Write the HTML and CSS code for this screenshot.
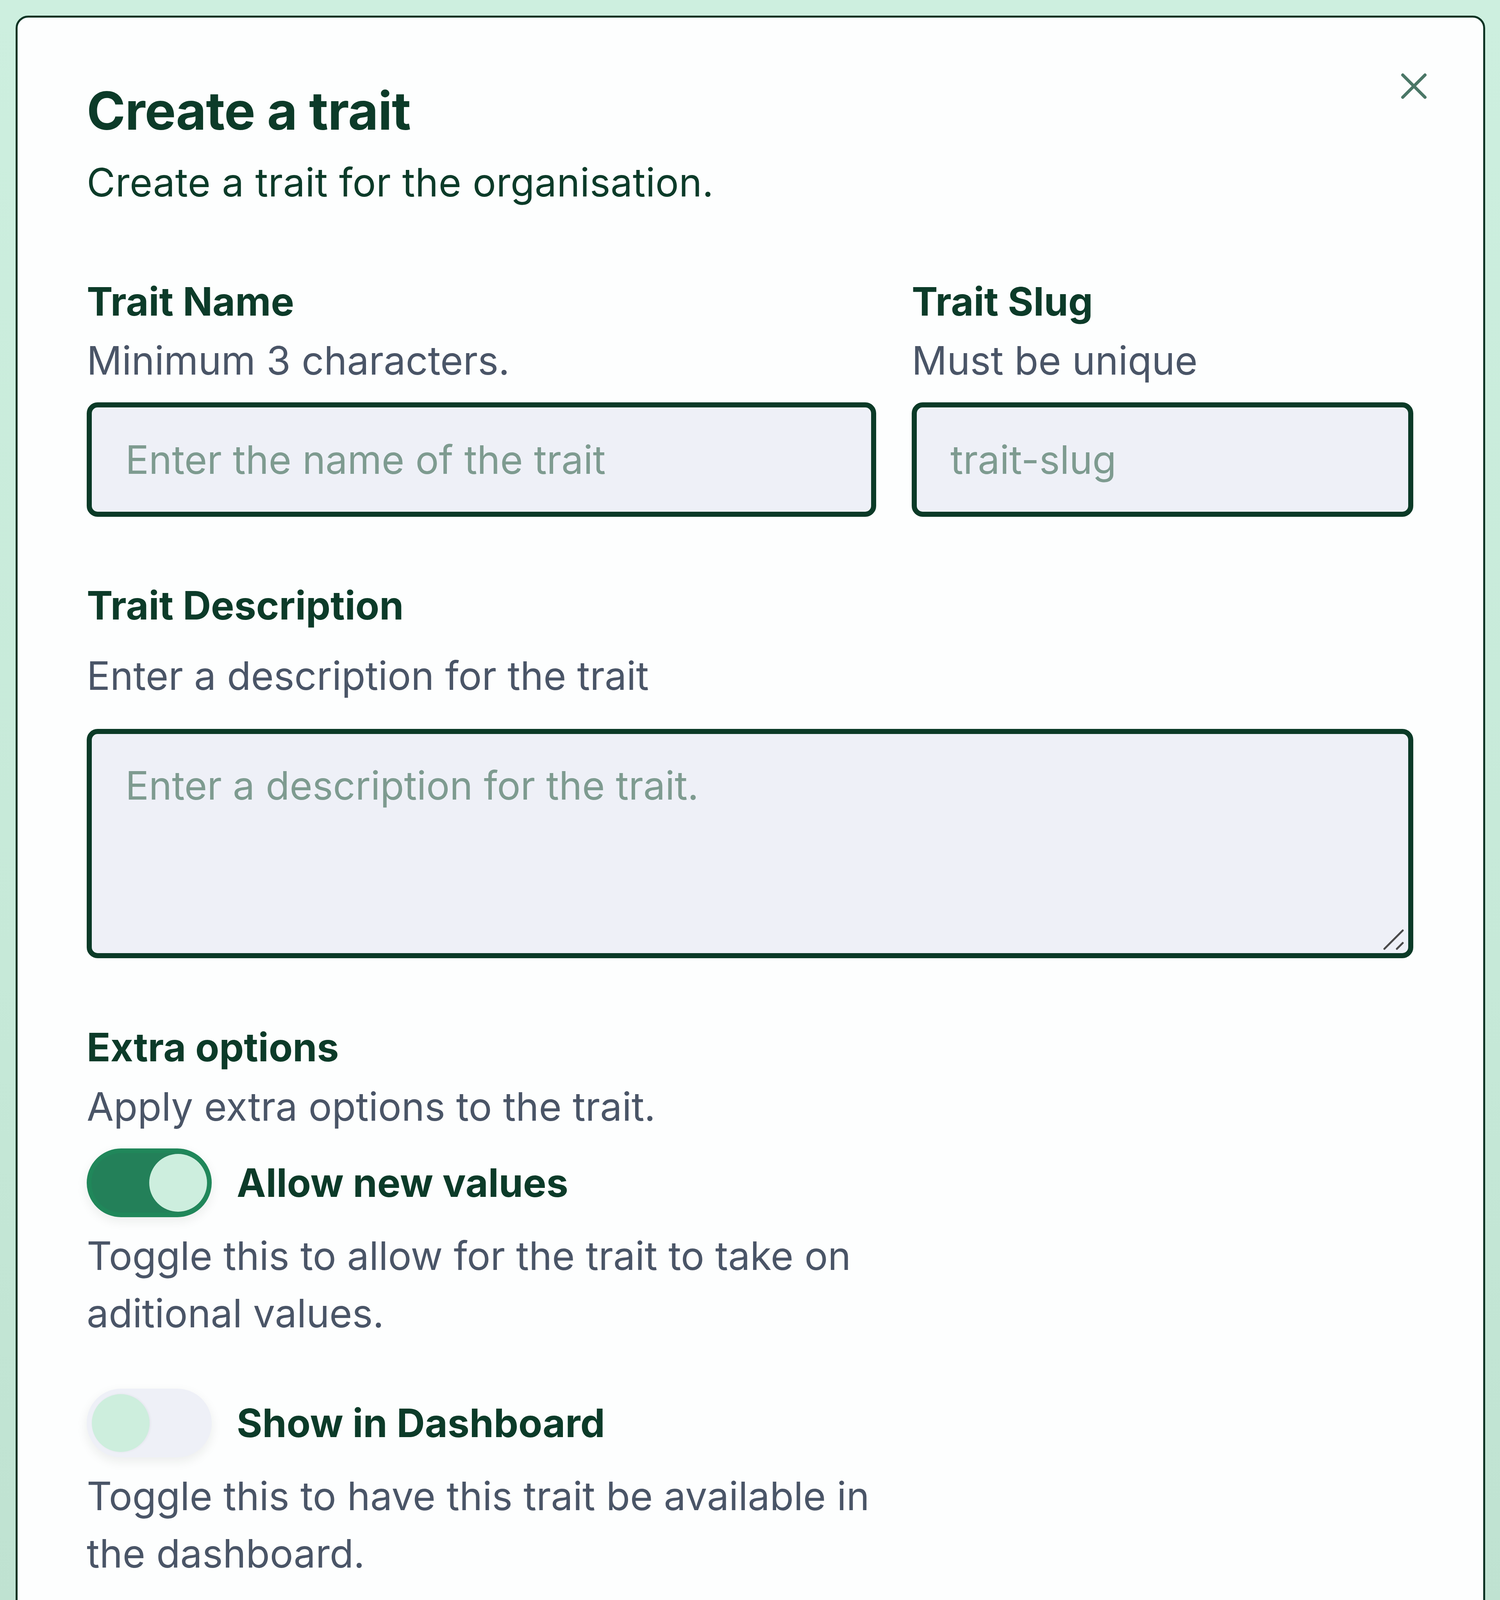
FILE: index.html
```html
<!DOCTYPE html>
<html lang="en">
<head>
<meta charset="utf-8">
<title>Create a trait</title>
<link rel="stylesheet" href="styles.css">
</head>
<body>
<div class="modal">
  <button class="close" aria-label="Close">
    <svg viewBox="0 0 67 67" width="67" height="67"><path d="M5 5 L62 62 M62 5 L5 62" stroke="currentColor" stroke-width="8" stroke-linecap="round" fill="none"/></svg>
  </button>
  <h1 class="title">Create a trait</h1>
  <p class="subtitle">Create a trait for the organisation.</p>

  <div class="fields">
    <div class="field">
      <label class="label">Trait Name</label>
      <p class="help">Minimum 3 characters.</p>
      <input class="input" type="text" placeholder="Enter the name of the trait">
    </div>
    <div class="field">
      <label class="label">Trait Slug</label>
      <p class="help">Must be unique</p>
      <input class="input" type="text" placeholder="trait-slug">
    </div>
  </div>

  <div class="desc-field">
    <label class="label">Trait Description</label>
    <p class="help help-spaced">Enter a description for the trait</p>
    <div class="textarea-wrap">
      <textarea class="textarea" placeholder="Enter a description for the trait."></textarea>
      <svg class="grip" viewBox="0 0 60 60" width="60" height="60"><path d="M8 55 L55 8 M40 55 L55 40" stroke="#4a4a4a" stroke-width="5" stroke-linecap="round" fill="none"/></svg>
    </div>
  </div>

  <div class="options">
    <div class="label">Extra options</div>
    <p class="help">Apply extra options to the trait.</p>

    <div class="option first">
      <div class="option-row">
        <span class="toggle on"><span class="knob"></span></span>
        <span class="option-label">Allow new values</span>
      </div>
      <p class="option-help">Toggle this to allow for the trait to take on aditional values.</p>
    </div>

    <div class="option">
      <div class="option-row">
        <span class="toggle"><span class="knob"></span></span>
        <span class="option-label">Show in Dashboard</span>
      </div>
      <p class="option-help">Toggle this to have this trait be available in the dashboard.</p>
    </div>

    <div class="option">
      <div class="option-row">
        <span class="toggle"><span class="knob"></span></span>
        <span class="option-label">Show in global filters</span>
      </div>
      <p class="option-help">Toggle this to have this trait be available in global filters.</p>
    </div>
  </div>

  <div class="actions">
    <button class="primary">Create Trait</button>
  </div>
</div>
</body>
</html>
```

FILE: styles.css
```css
* { box-sizing: border-box; }

html {
  margin: 0;
  padding: 0;
  background: #b9dccb;
}

body {
  margin: 0;
  width: 3840px;
  min-height: 5524px;
  padding: 40px 38px 20px 40px;
  font-family: Inter, "Noto Sans", "Liberation Sans", sans-serif;
  background: linear-gradient(180deg, #cdefdf 0%, #c6e9d8 45%, #b9dccb 100%);
}

.modal {
  position: relative;
  width: 3762px;
  height: 5464px;
  background: #fdfefe;
  border: 5px solid #0a3323;
  border-radius: 32px;
  padding: 158px 179px 0 177px;
}

.close {
  position: absolute;
  top: 142px;
  right: 144px;
  width: 67px;
  height: 67px;
  padding: 0;
  border: 0;
  background: none;
  color: #4b7767;
  display: block;
}
.close svg { display: block; }

.title {
  margin: 0;
  font-size: 134px;
  line-height: 161px;
  font-weight: 700;
  color: #0c3b29;
  letter-spacing: -1px;
}

.subtitle {
  margin: 28px 0 0;
  font-size: 100px;
  line-height: 150px;
  color: #0c3b29;
  letter-spacing: 0.5px;
}

.fields {
  margin-top: 153px;
  display: grid;
  grid-template-columns: 2021fr 1284fr;
  column-gap: 91px;
}

.field { display: flex; flex-direction: column; }

.label {
  display: block;
  font-size: 100px;
  line-height: 153px;
  font-weight: 700;
  color: #0c3b29;
}

.help {
  margin: 0;
  font-size: 100px;
  line-height: 150px;
  color: #4a5567;
}

.help-spaced { margin-top: 29px; }

.input {
  margin-top: 32px;
  width: 100%;
  height: 293px;
  border: 13px solid #0b3a27;
  border-radius: 28px;
  background: #eef0f7;
  padding: 0 86px;
  font-family: inherit;
  font-size: 100px;
  color: #0c3b29;
  outline: none;
}

.input::placeholder,
.textarea::placeholder {
  color: #7e9b90;
  opacity: 1;
}

.desc-field { margin-top: 150px; }

.textarea-wrap {
  position: relative;
  margin-top: 61px;
}

.textarea {
  display: block;
  width: 100%;
  height: 587px;
  border: 13px solid #0b3a27;
  border-radius: 28px;
  background: #eef0f7;
  padding: 57px 86px;
  font-family: inherit;
  font-size: 100px;
  line-height: 150px;
  color: #0c3b29;
  resize: none;
  outline: none;
}

.grip {
  position: absolute;
  right: 22px;
  bottom: 19px;
}

.options { margin-top: 151px; }

.options .label { line-height: 154px; }

.option { margin-top: 120px; }
.option.first { margin-top: 32px; }

.option-row {
  display: flex;
  align-items: center;
  gap: 64px;
}

.toggle {
  position: relative;
  flex: none;
  width: 320px;
  height: 176px;
  border-radius: 88px;
  background: #eef0f7;
  box-shadow: 0 10px 28px rgba(20, 40, 30, 0.08);
}

.toggle .knob {
  position: absolute;
  top: 14px;
  left: 13px;
  width: 148px;
  height: 148px;
  border-radius: 50%;
  background: #cdeedd;
  box-shadow: 2px 0 6px rgba(0, 0, 0, 0.05);
}

.toggle.on {
  background: #238059;
  border: 12px solid #20875a;
}

.toggle.on .knob {
  top: 2px;
  left: auto;
  right: 0;
  background: #cdeede;
  box-shadow: none;
}

.option-label {
  font-size: 100px;
  line-height: 150px;
  font-weight: 700;
  color: #0c3b29;
}

.option-help {
  margin: 25px 0 0;
  max-width: 2030px;
  font-size: 100px;
  line-height: 147px;
  color: #4a5567;
}

.actions {
  margin-top: 191px;
  display: flex;
  justify-content: flex-end;
}

.primary {
  width: 690px;
  height: 273px;
  border: 0;
  border-radius: 28px;
  background: #22835b;
  color: #ffffff;
  font-family: inherit;
  font-size: 106px;
  font-weight: 500;
  letter-spacing: -0.5px;
  padding: 0;
}
```
